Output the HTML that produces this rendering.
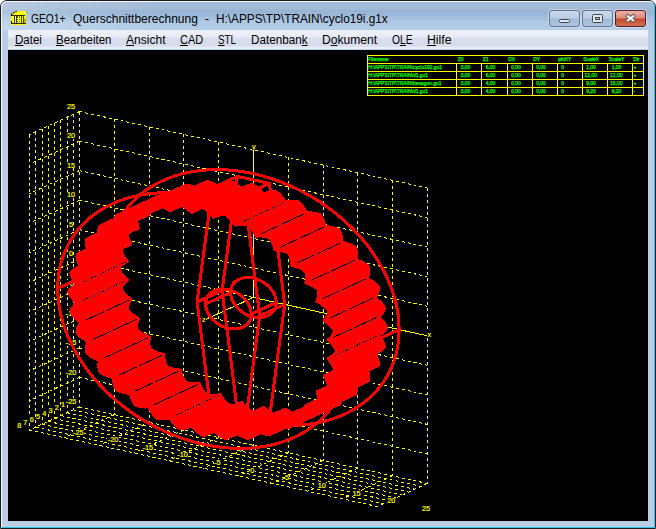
<!DOCTYPE html>
<html><head><meta charset="utf-8"><title>GEO1+ Querschnittberechnung</title>
<style>
html,body{margin:0;padding:0;background:#fff;}
body{width:656px;height:529px;position:relative;overflow:hidden;font-family:"Liberation Sans",sans-serif;}
#win{position:absolute;left:0;top:0;width:654px;height:527px;border:1px solid #1c1c1c;border-radius:7px 7px 0 0;
 background:#b9cde4;overflow:hidden;}
#win:before{content:"";position:absolute;left:0;top:0;right:0;bottom:0;border-radius:6px 6px 0 0;
 border-left:1px solid #f4f8fc;border-top:1px solid #f4f8fc;border-right:1px solid #2bc6e6;border-bottom:1px solid #2bc6e6;z-index:5;pointer-events:none}
#cap{position:absolute;left:0;top:0;width:654px;height:29px;
 background:linear-gradient(to bottom,#a4bcd8 0px,#a2bbd7 8px,#97b4d5 9px,#9ab7d7 14px,#a2bedc 15px,#a6c2df 19px,#afc9e5 20px,#b3cde8 28px);}
#cap2{position:absolute;left:0;top:0;width:160px;height:29px;background:linear-gradient(to right,rgba(255,255,255,.22),rgba(255,255,255,0));}
#ttl{position:absolute;left:0;top:9.6px;height:16px}
.tw{position:absolute;top:0;font-size:12px;line-height:16px;color:#000;white-space:pre;transform-origin:0 0}
#menu{position:absolute;left:7px;top:29px;width:640px;height:20px;
 background:linear-gradient(to bottom,#edf0f8 0px,#e9ecf6 7px,#d9deee 8px,#d6dcec 16px,#e6eaf5 17px,#eef1f8 19px,#b9cde4 19px);}
.mi{position:absolute;top:2px;font-size:12px;line-height:16px;color:#000;white-space:pre;transform-origin:0 0}
.mi u{text-decoration:underline;text-underline-offset:1px}
.btn{position:absolute;top:9px;width:29px;height:15px;border:1px solid #62748f;border-radius:3px;
 background:linear-gradient(to bottom,#cbd9ea 0,#bccde3 7px,#a3bad7 8px,#adc5e0 15px);box-shadow:0 0 0 1px rgba(255,255,255,.35)}
#bclose{border-color:#5b1a33;background:linear-gradient(to bottom,#e9b3a6 0,#dc8b79 7px,#c24a2b 8px,#d2704f 15px);}
</style></head><body>
<div id="win">
 <div id="cap"></div><div id="cap2"></div>
 <svg width="16" height="16" viewBox="0 0 16 16" style="position:absolute;left:10px;top:9px" shape-rendering="crispEdges">
  <path d="M0 4.5L6.5 0.5H15V15H0Z" fill="#ff0"/>
  <path d="M0 4.5L6.5 0.5" stroke="#111" stroke-width="1.2" stroke-dasharray="1.6 1" fill="none" shape-rendering="auto"/>
  <path d="M0.5 4V6M0.5 11V13.5" stroke="#111" stroke-width="1" fill="none"/>
  <path d="M1 5.5H14M0 13.5H15" stroke="#2a2a00" stroke-width="1" fill="none"/>
  <path d="M3 6V13M5 6V13M10 6V13M12 6V13" stroke="#3c3c00" stroke-width="1" fill="none"/>
  <path d="M6.5 7V13M8.5 7V13M6 6.5H9" stroke="#6a6a00" stroke-width="1" stroke-dasharray="1 1" fill="none"/>
  <path d="M13 9L15 7V12L13 13Z" fill="#b8b800"/>
 </svg>
 <div id="ttl"><span class="tw" style="left:29.5px;transform:scaleX(0.852)">GEO1+</span><span class="tw" style="left:72.3px;transform:scaleX(1.001)">Querschnittberechnung</span><span class="tw" style="left:204.1px;transform:scaleX(1.001)">-</span><span class="tw" style="left:214.8px;transform:scaleX(0.983)">H:\APPS\TP\TRAIN\cyclo19i.g1x</span></div>
 <div class="btn" style="left:548px"><svg width="29" height="15" style="position:absolute;left:0;top:0"><rect x="9.5" y="8.5" width="10" height="3" rx="1" fill="#e6e8ea" stroke="#3c4656"/></svg></div>
 <div class="btn" style="left:581px"><svg width="29" height="15" style="position:absolute;left:0;top:0"><rect x="9.5" y="3.5" width="10" height="8" rx="1" fill="#e6e8ea" stroke="#3c4656"/><rect x="12.5" y="6.5" width="4" height="2" fill="#a9bfdb" stroke="#3c4656"/></svg></div>
 <div class="btn" id="bclose" style="left:614px"><svg width="29" height="15" style="position:absolute;left:0;top:0"><path d="M10.3 4.1L18.7 10.5M18.7 4.1L10.3 10.5" stroke="#52525e" stroke-width="3.8" stroke-linecap="butt"/><path d="M11 4.6L18 10M18 4.6L11 10" stroke="#fff" stroke-width="2.1" stroke-linecap="butt"/></svg></div>
 <div id="menu"><span class="mi" style="left:6.6px;transform:scaleX(0.960)"><u>D</u>atei</span><span class="mi" style="left:47.5px;transform:scaleX(0.954)"><u>B</u>earbeiten</span><span class="mi" style="left:118.0px;transform:scaleX(1.004)"><u>A</u>nsicht</span><span class="mi" style="left:171.7px;transform:scaleX(0.916)"><u>C</u>AD</span><span class="mi" style="left:209.8px;transform:scaleX(0.818)"><u>S</u>TL</span><span class="mi" style="left:243.2px;transform:scaleX(0.975)">Datenban<u>k</u></span><span class="mi" style="left:314.2px;transform:scaleX(1.007)">D<u>o</u>kument</span><span class="mi" style="left:383.9px;transform:scaleX(0.858)">O<u>L</u>E</span><span class="mi" style="left:419.0px;transform:scaleX(1.021)"><u>H</u>ilfe</span></div>
</div>
<svg width="640" height="471" viewBox="8 50 640 471" style="position:absolute;left:8px;top:50px" shape-rendering="crispEdges">
<rect x="8" y="50" width="640" height="471" fill="#000"/>
<path d="M79.5 111.5L79.5 407M79.5 407L427.3 483.5M114.3 119.1L114.3 414.6M79.5 377.4L427.3 453.9M149.1 126.8L149.1 422.3M79.5 347.9L427.3 424.4M183.8 134.4L183.8 429.9M79.5 318.4L427.3 394.9M218.6 142.1L218.6 437.6M79.5 288.8L427.3 365.3M253.4 149.8L253.4 445.2M79.5 259.2L427.3 335.8M288.2 157.4L288.2 452.9M79.5 229.7L427.3 306.2M323 165.1L323 460.6M79.5 200.2L427.3 276.6M357.7 172.7L357.7 468.2M79.5 170.6L427.3 247.1M392.5 180.4L392.5 475.9M79.5 141.1L427.3 217.6M427.3 188L427.3 483.5M79.5 111.5L427.3 188M73.2 114.4L73.2 409.9M67 117.3L67 412.8M60.8 120.1L60.8 415.6M54.5 123L54.5 418.5M48.2 125.9L48.2 421.4M42 128.8L42 424.3M35.8 131.7L35.8 427.2M29.5 134.5L29.5 430M79.5 407L29.5 430M79.5 377.4L29.5 400.5M79.5 347.9L29.5 370.9M79.5 318.4L29.5 341.4M79.5 288.8L29.5 311.8M79.5 259.2L29.5 282.3M79.5 229.7L29.5 252.7M79.5 200.2L29.5 223.2M79.5 170.6L29.5 193.6M79.5 141.1L29.5 164.1M79.5 111.5L29.5 134.5M73.2 409.9L421.1 486.4M67 412.8L414.8 489.3M60.8 415.6L408.6 492.1M54.5 418.5L402.3 495M48.2 421.4L396.1 497.9M42 424.3L389.8 500.8M35.8 427.2L383.6 503.7M29.5 430L377.3 506.5M114.3 414.6L64.3 437.7M149.1 422.3L99.1 445.3M183.8 429.9L133.8 453M218.6 437.6L168.6 460.6M253.4 445.2L203.4 468.3M288.2 452.9L238.2 475.9M323 460.6L273 483.6M357.7 468.2L307.7 491.2M392.5 475.9L342.5 498.9M427.3 483.5L377.3 506.5" fill="none" stroke="#ff0" stroke-width="1" stroke-dasharray="3 3"/>
<path d="M253.4 297.5L427.3 335.8M253.4 297.5L253.4 149.8M253.4 297.5L203.4 320.5" fill="none" stroke="#ff0" stroke-width="1"/>
<path d="M65.4 398.4h11.3v6.4h-11.3zM72.7 428.7h11.3v6.4h-11.3zM65.4 368.8h11.3v6.4h-11.3zM107.4 436.3h11.3v6.4h-11.3zM65.4 339.3h11.3v6.4h-11.3zM142.2 444h11.3v6.4h-11.3zM65.4 309.8h11.3v6.4h-11.3zM177 451.6h11.3v6.4h-11.3zM67.4 280.2h7.2v6.4h-7.2zM213.8 459.3h7.2v6.4h-7.2zM68.7 250.6h4.7v6.4h-4.7zM249.8 466.9h4.7v6.4h-4.7zM68.7 221.1h4.7v6.4h-4.7zM284.6 474.6h4.7v6.4h-4.7zM66.6 191.5h8.8v6.4h-8.8zM317.4 482.2h8.8v6.4h-8.8zM66.6 162h8.8v6.4h-8.8zM352.1 489.9h8.8v6.4h-8.8zM66.6 132.4h8.8v6.4h-8.8zM386.9 497.6h8.8v6.4h-8.8zM66.6 102.9h8.8v6.4h-8.8zM421.7 505.2h8.8v6.4h-8.8zM60.6 401.6h4.7v6.4h-4.7zM54.4 404.5h4.7v6.4h-4.7zM48.1 407.3h4.7v6.4h-4.7zM41.9 410.2h4.7v6.4h-4.7zM35.6 413.1h4.7v6.4h-4.7zM29.3 416h4.7v6.4h-4.7zM23.1 418.9h4.7v6.4h-4.7zM16.8 421.7h4.7v6.4h-4.7zM426.9 330.9h4.7v6.4h-4.7zM251.5 142.9h4.7v6.4h-4.7zM201.5 315.7h4.7v6.4h-4.7z" fill="#000"/>
<g fill="#ff0" stroke="#ff0" stroke-width="0.2" font-family="'Liberation Sans',sans-serif" font-size="7.3px" shape-rendering="auto"><text x="71" y="404.2" text-anchor="middle">-25</text><text x="78.3" y="434.5" text-anchor="middle">-25</text><text x="71" y="374.6" text-anchor="middle">-20</text><text x="113.1" y="442.1" text-anchor="middle">-20</text><text x="71" y="345.1" text-anchor="middle">-15</text><text x="147.9" y="449.8" text-anchor="middle">-15</text><text x="71" y="315.6" text-anchor="middle">-10</text><text x="182.6" y="457.4" text-anchor="middle">-10</text><text x="71" y="286" text-anchor="middle">-5</text><text x="217.4" y="465.1" text-anchor="middle">-5</text><text x="71" y="256.4" text-anchor="middle">0</text><text x="252.2" y="472.8" text-anchor="middle">0</text><text x="71" y="226.9" text-anchor="middle">5</text><text x="287" y="480.4" text-anchor="middle">5</text><text x="71" y="197.3" text-anchor="middle">10</text><text x="321.8" y="488.1" text-anchor="middle">10</text><text x="71" y="167.8" text-anchor="middle">15</text><text x="356.5" y="495.7" text-anchor="middle">15</text><text x="71" y="138.2" text-anchor="middle">20</text><text x="391.3" y="503.4" text-anchor="middle">20</text><text x="71" y="108.7" text-anchor="middle">25</text><text x="426.1" y="511" text-anchor="middle">25</text><text x="63" y="407.4" text-anchor="middle">1</text><text x="56.7" y="410.3" text-anchor="middle">2</text><text x="50.5" y="413.1" text-anchor="middle">3</text><text x="44.2" y="416" text-anchor="middle">4</text><text x="38" y="418.9" text-anchor="middle">5</text><text x="31.7" y="421.8" text-anchor="middle">6</text><text x="25.4" y="424.7" text-anchor="middle">7</text><text x="19.2" y="427.5" text-anchor="middle">8</text><text x="429.3" y="336.8" text-anchor="middle">x</text><text x="253.9" y="148.8" text-anchor="middle">y</text><text x="203.9" y="321.5" text-anchor="middle">z</text></g>
<path d="M399.1 329.6L398.9 323L398.3 316.4L397.3 309.8L395.9 303.1L394.2 296.4L392 289.7L389.4 283.1L386.5 276.4L383.2 269.8L379.6 263.4L375.6 256.9L371.3 250.7L366.7 244.5L361.7 238.5L356.4 232.6L350.9 226.9L345.1 221.4L339.1 216.2L332.8 211.1L326.3 206.3L319.6 201.7L312.7 197.4L305.6 193.4L298.4 189.7L291.1 186.2L283.7 183.1L276.2 180.2L268.6 177.7L261 175.5L253.4 173.7L245.8 172.2L238.2 171L230.6 170.2L223.1 169.7L215.7 169.6L208.4 169.8L201.2 170.4L194.1 171.4L187.2 172.6L180.5 174.2L174 176.2L167.7 178.5L161.7 181.1L155.9 184L150.4 187.3L145.1 190.8L140.1 194.7L135.5 198.8L131.2 203.2L127.2 207.8L123.6 212.7L120.3 217.9L117.4 223.2L114.8 228.8L112.6 234.5L110.9 240.4L109.5 246.5L108.5 252.7L107.9 259L107.7 265.4L107.9 272L108.5 278.6L109.5 285.2L110.9 291.9L112.6 298.6L114.8 305.3L117.4 311.9L120.3 318.6L123.6 325.2L127.2 331.6L131.2 338.1L135.5 344.3L140.1 350.5L145.1 356.5L150.4 362.4L155.9 368.1L161.7 373.6L167.7 378.8L174 383.9L180.5 388.7L187.2 393.3L194.1 397.6L201.2 401.6L208.4 405.3L215.7 408.8L223.1 411.9L230.6 414.8L238.2 417.3L245.8 419.5L253.4 421.3L261 422.8L268.6 424L276.2 424.8L283.7 425.3L291.1 425.4L298.4 425.2L305.6 424.6L312.7 423.6L319.6 422.4L326.3 420.8L332.8 418.8L339.1 416.5L345.1 413.9L350.9 411L356.4 407.7L361.7 404.2L366.7 400.3L371.3 396.2L375.6 391.8L379.6 387.2L383.2 382.3L386.5 377.1L389.4 371.8L392 366.2L394.2 360.5L395.9 354.6L397.3 348.5L398.3 342.3L398.9 336ZM349.1 352.6L348.9 346.1L348.3 339.5L347.3 332.8L345.9 326.2L344.2 319.5L342 312.8L339.4 306.1L336.5 299.5L333.2 292.9L329.6 286.4L325.6 280L321.3 273.7L316.7 267.5L311.7 261.5L306.4 255.7L300.9 250L295.1 244.5L289.1 239.2L282.8 234.2L276.3 229.3L269.6 224.8L262.7 220.5L255.6 216.4L248.4 212.7L241.1 209.2L233.7 206.1L226.2 203.3L218.6 200.8L211 198.6L203.4 196.7L195.8 195.2L188.2 194.1L180.6 193.2L173.1 192.8L165.7 192.6L158.4 192.9L151.2 193.5L144.1 194.4L137.2 195.7L130.5 197.3L124 199.2L117.7 201.5L111.7 204.1L105.9 207.1L100.4 210.3L95.1 213.9L90.1 217.7L85.5 221.8L81.2 226.2L77.2 230.9L73.6 235.8L70.3 240.9L67.4 246.2L64.8 251.8L62.6 257.5L60.9 263.4L59.5 269.5L58.5 275.7L57.9 282.1L57.7 288.5L57.9 295L58.5 301.6L59.5 308.2L60.9 314.9L62.6 321.6L64.8 328.3L67.4 335L70.3 341.6L73.6 348.2L77.2 354.7L81.2 361.1L85.5 367.4L90.1 373.5L95.1 379.6L100.4 385.4L105.9 391.1L111.7 396.6L117.7 401.9L124 406.9L130.5 411.7L137.2 416.3L144.1 420.6L151.2 424.6L158.4 428.4L165.7 431.8L173.1 435L180.6 437.8L188.2 440.3L195.8 442.5L203.4 444.4L211 445.9L218.6 447L226.2 447.8L233.7 448.3L241.1 448.4L248.4 448.2L255.6 447.6L262.7 446.7L269.6 445.4L276.3 443.8L282.8 441.8L289.1 439.5L295.1 436.9L300.9 434L306.4 430.8L311.7 427.2L316.7 423.4L321.3 419.2L325.6 414.9L329.6 410.2L333.2 405.3L336.5 400.2L339.4 394.8L342 389.3L344.2 383.5L345.9 377.6L347.3 371.6L348.3 365.4L348.9 359ZM399.1 329.6L349.1 352.6M107.7 265.4L57.7 288.5M276.2 302.5L276 299.9L275.4 297.3L274.5 294.7L273.2 292.2L271.5 289.7L269.5 287.3L267.3 285.2L264.8 283.2L262.1 281.5L259.3 280.1L256.4 278.9L253.4 278.1L250.4 277.6L247.5 277.5L244.7 277.7L242 278.2L239.5 279.1L237.3 280.2L235.3 281.7L233.6 283.5L232.3 285.4L231.4 287.6L230.8 290L230.6 292.5L230.8 295.1L231.4 297.7L232.3 300.3L233.6 302.8L235.3 305.3L237.3 307.7L239.5 309.8L242 311.8L244.7 313.5L247.5 314.9L250.4 316.1L253.4 316.9L256.4 317.4L259.3 317.5L262.1 317.3L264.8 316.8L267.3 315.9L269.5 314.8L271.5 313.3L273.2 311.5L274.5 309.6L275.4 307.4L276 305ZM251.2 314L251 311.5L250.4 308.9L249.5 306.2L248.2 303.7L246.5 301.2L244.5 298.9L242.3 296.7L239.8 294.7L237.1 293L234.3 291.6L231.4 290.5L228.4 289.6L225.4 289.1L222.5 289L219.7 289.2L217 289.7L214.5 290.6L212.3 291.8L210.3 293.2L208.6 295L207.3 297L206.4 299.2L205.8 301.5L205.6 304L205.8 306.6L206.4 309.2L207.3 311.8L208.6 314.4L210.3 316.8L212.3 319.2L214.5 321.3L217 323.3L219.7 325L222.5 326.4L225.4 327.6L228.4 328.4L231.4 328.9L234.3 329L237.1 328.8L239.8 328.3L242.3 327.5L244.5 326.3L246.5 324.8L248.2 323.1L249.5 321.1L250.4 318.9L251 316.5ZM276.2 302.5L251.2 314M230.6 292.5L205.6 304M284.7 304.4L269.4 183.4L237.4 176.4L222.1 290.6L237.4 411.6L269.4 418.6ZM259.7 315.9L244.4 194.9L212.4 187.9L197.1 302.1L212.4 423.1L244.4 430.1ZM284.7 304.4L259.7 315.9M269.4 183.4L244.4 194.9M237.4 176.4L212.4 187.9M222.1 290.6L197.1 302.1M237.4 411.6L212.4 423.1M269.4 418.6L244.4 430.1" fill="none" stroke="#f00" stroke-width="3" stroke-linejoin="round" stroke-linecap="round"/>
<path d="M386.5 327.8L336.5 350.9M385.9 326.3L335.9 349.3M385.1 324.7L335.1 347.8M384.1 323.1L334.1 346.2M382.8 321.5L332.8 344.6M381.4 319.9L331.4 342.9M379.9 318.3L329.9 341.3M378.3 316.7L328.3 339.7M379.6 315.5L329.6 338.6M380.9 314.3L330.9 337.4M382 313.1L332 336.1M382.9 311.8L332.9 334.8M383.7 310.4L333.7 333.5M384.2 309.1L334.2 332.1M384.4 307.7L334.4 330.7M383.6 306.2L333.6 329.2M382.5 304.7L332.5 327.7M381.2 303.2L331.2 326.2M379.7 301.7L329.7 324.8M378.1 300.3L328.1 323.3M376.3 298.9L326.3 321.9M374.5 297.5L324.5 320.5M375.5 296.1L325.5 319.1M376.4 294.6L326.4 317.7M377.2 293.2L327.2 316.2M377.8 291.7L327.8 314.7M378.2 290.2L328.2 313.2M378.4 288.7L328.4 311.7M378.4 287.2L328.4 310.2M377.3 285.8L327.3 308.8M376 284.4L326 307.5M374.5 283.1L324.5 306.1M372.8 281.8L322.8 304.9M370.9 280.6L320.9 303.6M369 279.4L319 302.4M367 278.3L317 301.3M367.6 276.7L317.6 299.7M368.2 275L318.2 298.1M368.6 273.4L318.6 296.5M368.9 271.8L318.9 294.8M369 270.2L319 293.2M368.9 268.6L318.9 291.6M368.5 267.1L318.5 290.1M367.2 265.8L317.2 288.8M365.7 264.6L315.7 287.6M364 263.5L314 286.5M362.1 262.4L312.1 285.5M360.2 261.5L310.2 284.5M358.1 260.5L308.1 283.6M356 259.7L306 282.7M356.3 257.9L306.3 281M356.5 256.2L306.5 279.2M356.6 254.4L306.6 277.5M356.5 252.7L306.5 275.7M356.2 251L306.2 274.1M355.8 249.4L305.8 272.5M355.2 247.9L305.2 270.9M353.7 246.8L303.7 269.8M352 245.8L302 268.8M350.2 244.9L300.2 268M348.2 244.1L298.2 267.2M346.2 243.4L296.2 266.5M344 242.8L294 265.9M341.9 242.3L291.9 265.3M341.8 240.4L291.8 263.5M341.6 238.6L291.6 261.6M341.3 236.8L291.3 259.8M340.9 235L290.9 258M340.3 233.3L290.3 256.4M339.6 231.7L289.6 254.8M338.7 230.3L288.7 253.3M337.1 229.4L287.1 252.4M335.3 228.6L285.3 251.6M333.4 228L283.4 251M331.4 227.5L281.4 250.5M329.3 227.1L279.3 250.1M327.2 226.8L277.2 249.8M325 226.6L275 249.6M324.6 224.7L274.6 247.7M324 222.8L274 245.8M323.4 221L273.4 244M322.6 219.2L272.6 242.3M321.8 217.6L271.8 240.6M320.7 216.1L270.7 239.1M319.6 214.7L269.6 237.7M317.9 214L267.9 237.1M316 213.5L266 236.6M314.1 213.2L264.1 236.2M312.1 213L262.1 236M310.1 212.9L260.1 235.9M308.1 212.9L258.1 236M306 213L256 236.1M305.2 211.2L255.2 234.2M304.3 209.3L254.3 232.4M303.3 207.5L253.3 230.6M302.3 205.9L252.3 228.9M301.1 204.3L251.1 227.4M299.8 202.9L249.8 226M298.5 201.7L248.5 224.7M296.7 201.3L246.7 224.3M294.9 201L244.9 224.1M293 201L243 224M291.1 201.1L241.1 224.1M289.2 201.3L239.2 224.4M287.3 201.7L237.3 224.7M285.3 202.1L235.3 225.1M284.2 200.3L234.2 223.3M283 198.5L233 221.6M281.7 196.9L231.7 219.9M280.4 195.3L230.4 218.3M278.9 193.9L228.9 216.9M277.5 192.7L227.5 215.7M275.9 191.6L225.9 214.6M274.2 191.4L224.2 214.5M272.4 191.5L222.4 214.5M270.7 191.7L220.7 214.8M268.9 192.1L218.9 215.2M267.1 192.7L217.1 215.7M265.4 193.4L215.4 216.4M263.7 194.1L213.7 217.1M262.2 192.4L212.2 215.5M260.7 190.8L210.7 213.8M259.2 189.3L209.2 212.3M257.6 187.9L207.6 210.9M256 186.7L206 209.7M254.4 185.6L204.4 208.6M252.7 184.8L202.7 207.8M251 184.9L201 207.9M249.4 185.2L199.4 208.2M247.8 185.7L197.8 208.8M246.2 186.4L196.2 209.5M244.7 187.3L194.7 210.3M243.2 188.2L193.2 211.3M241.7 189.3L191.7 212.3M240 187.8L190 210.8M238.3 186.3L188.3 209.4M236.5 185L186.5 208.1M234.7 183.8L184.7 206.9M233 182.8L183 205.8M231.2 182L181.2 205M229.5 181.4L179.5 204.4M227.9 181.8L177.9 204.8M226.5 182.3L176.5 205.4M225.1 183.1L175.1 206.2M223.7 184.1L173.7 207.2M222.4 185.2L172.4 208.3M221.2 186.5L171.2 209.5M220.1 187.7L170.1 210.8M218.2 186.5L168.2 209.5M216.2 185.3L166.2 208.3M214.3 184.2L164.3 207.2M212.4 183.2L162.4 206.3M210.5 182.5L160.5 205.5M208.7 181.9L158.7 204.9M207 181.6L157 204.6M205.6 182.2L155.6 205.2M204.3 183L154.3 206.1M203.2 184.1L153.2 207.1M202.1 185.3L152.1 208.3M201.1 186.6L151.1 209.7M200.2 188.1L150.2 211.1M199.4 189.6L149.4 212.6M197.4 188.6L147.4 211.6M195.3 187.7L145.3 210.7M193.3 186.8L143.3 209.9M191.3 186.2L141.3 209.2M189.4 185.7L139.4 208.7M187.5 185.4L137.5 208.4M185.8 185.3L135.8 208.3M184.7 186.1L134.7 209.2M183.6 187.2L133.6 210.2M182.8 188.5L132.8 211.5M182 189.9L132 212.9M181.4 191.4L131.4 214.5M180.8 193.1L130.8 216.1M180.4 194.7L130.4 217.8M178.2 194L128.2 217.1M176.1 193.4L126.1 216.4M174 192.9L124 215.9M172 192.5L122 215.5M170.1 192.3L120.1 215.3M168.4 192.3L118.4 215.3M166.7 192.4L116.7 215.5M165.8 193.5L115.8 216.6M165.1 194.8L115.1 217.8M164.5 196.2L114.5 219.2M164.1 197.8L114.1 220.8M163.8 199.5L113.8 222.5M163.6 201.2L113.6 224.3M163.5 203L113.5 226.1M161.4 202.6L111.4 225.7M159.3 202.3L109.3 225.4M157.2 202.1L107.2 225.2M155.2 202L105.2 225.1M153.4 202.1L103.4 225.2M151.7 202.4L101.7 225.4M150.2 202.8L100.2 225.9M149.6 204.1L99.6 227.1M149.2 205.5L99.2 228.5M148.9 207L98.9 230.1M148.8 208.7L98.8 231.8M148.9 210.5L98.9 233.6M149.1 212.4L99.1 235.4M149.4 214.2L99.4 237.3M147.3 214.2L97.3 237.2M145.2 214.2L95.2 237.2M143.3 214.3L93.3 237.3M141.4 214.5L91.4 237.6M139.7 214.9L89.7 237.9M138.2 215.4L88.2 238.5M136.9 216.1L86.9 239.1M136.5 217.5L86.5 240.5M136.4 219L86.4 242.1M136.5 220.7L86.5 243.7M136.8 222.4L86.8 245.4M137.2 224.2L87.2 247.3M137.8 226.1L87.8 249.1M138.4 228L88.4 251M136.4 228.3L86.4 251.3M134.5 228.6L84.5 251.6M132.6 229L82.6 252M130.9 229.5L80.9 252.6M129.4 230.2L79.4 253.2M128.1 231L78.1 254M127 231.9L77 254.9M127 233.4L77 256.4M127.2 235L77.2 258M127.6 236.6L77.6 259.7M128.2 238.4L78.2 261.4M129 240.2L79 263.2M129.9 242L79.9 265.1M130.9 243.9L80.9 266.9M129.1 244.5L79.1 267.5M127.3 245.1L77.3 268.2M125.7 245.8L75.7 268.9M124.2 246.7L74.2 269.7M122.9 247.6L72.9 270.6M121.8 248.6L71.8 271.6M121 249.7L71 272.7M121.2 251.2L71.2 274.3M121.7 252.8L71.7 275.9M122.5 254.5L72.5 277.5M123.4 256.2L73.4 279.3M124.5 258L74.5 281M125.8 259.7L75.8 282.7M127.1 261.4L77.1 284.5M125.5 262.3L75.5 285.4M124 263.3L74 286.3M122.6 264.3L72.6 287.3M121.3 265.3L71.3 288.4M120.3 266.5L70.3 289.5M119.5 267.7L69.5 290.7M118.9 269L68.9 292M119.5 270.5L69.5 293.6M120.3 272.1L70.3 295.1M121.3 273.7L71.3 296.7M122.6 275.3L72.6 298.3M124 276.9L74 300M125.5 278.5L75.5 301.6M127.1 280.1L77.1 303.2M125.8 281.3L75.8 304.3M124.5 282.5L74.5 305.5M123.4 283.7L73.4 306.8M122.5 285L72.5 308.1M121.7 286.4L71.7 309.4M121.2 287.8L71.2 310.8M121 289.2L71 312.2M121.8 290.7L71.8 313.7M122.9 292.2L72.9 315.2M124.2 293.6L74.2 316.7M125.7 295.1L75.7 318.1M127.3 296.5L77.3 319.6M129.1 298L79.1 321M130.9 299.3L80.9 322.4M129.9 300.8L79.9 323.8M129 302.2L79 325.2M128.2 303.7L78.2 326.7M127.6 305.1L77.6 328.2M127.2 306.6L77.2 329.7M127 308.1L77 331.2M127 309.6L77 332.7M128.1 311L78.1 334.1M129.4 312.4L79.4 335.4M130.9 313.7L80.9 336.8M132.6 315L82.6 338M134.5 316.2L84.5 339.3M136.4 317.4L86.4 340.5M138.4 318.6L88.4 341.6M137.8 320.2L87.8 343.2M137.2 321.8L87.2 344.8M136.8 323.4L86.8 346.4M136.5 325L86.5 348.1M136.4 326.6L86.4 349.7M136.5 328.2L86.5 351.3M136.9 329.8L86.9 352.8M138.2 331L88.2 354.1M139.7 332.2L89.7 355.3M141.4 333.3L91.4 356.4M143.3 334.4L93.3 357.4M145.2 335.4L95.2 358.4M147.3 336.3L97.3 359.3M149.4 337.1L99.4 360.2M149.1 338.9L99.1 361.9M148.9 340.7L98.9 363.7M148.8 342.4L98.8 365.4M148.9 344.1L98.9 367.2M149.2 345.8L99.2 368.8M149.6 347.4L99.6 370.4M150.2 348.9L100.2 372M151.7 350L101.7 373.1M153.4 351L103.4 374.1M155.2 351.9L105.2 375M157.2 352.7L107.2 375.7M159.3 353.4L109.3 376.4M161.4 354L111.4 377M163.5 354.6L113.5 377.6M163.6 356.4L113.6 379.4M163.8 358.3L113.8 381.3M164.1 360.1L114.1 383.1M164.5 361.8L114.5 384.9M165.1 363.5L115.1 386.5M165.8 365.1L115.8 388.1M166.7 366.6L116.7 389.6M168.4 367.5L118.4 390.5M170.1 368.2L120.1 391.3M172 368.8L122 391.9M174 369.3L124 392.4M176.1 369.7L126.1 392.8M178.2 370L128.2 393.1M180.4 370.3L130.4 393.3M180.8 372.2L130.8 395.2M181.4 374L131.4 397.1M182 375.8L132 398.9M182.8 377.6L132.8 400.6M183.6 379.2L133.6 402.3M184.7 380.7L134.7 403.8M185.8 382.1L135.8 405.2M187.5 382.8L137.5 405.8M189.4 383.3L139.4 406.3M191.3 383.6L141.3 406.7M193.3 383.8L143.3 406.9M195.3 383.9L145.3 407M197.4 383.9L147.4 406.9M199.4 383.8L149.4 406.8M200.2 385.7L150.2 408.7M201.1 387.5L151.1 410.5M202.1 389.3L152.1 412.3M203.2 391L153.2 414M204.3 392.5L154.3 415.6M205.6 393.9L155.6 417M207 395.1L157 418.2M208.7 395.6L158.7 418.6M210.5 395.8L160.5 418.8M212.4 395.8L162.4 418.9M214.3 395.7L164.3 418.8M216.2 395.5L166.2 418.5M218.2 395.1L168.2 418.2M220.1 394.7L170.1 417.8M221.2 396.5L171.2 419.6M222.4 398.3L172.4 421.3M223.7 400L173.7 423M225.1 401.5L175.1 424.6M226.5 402.9L176.5 426M227.9 404.2L177.9 427.2M229.5 405.2L179.5 428.3M231.2 405.4L181.2 428.4M233 405.3L183 428.4M234.7 405.1L184.7 428.1M236.5 404.7L186.5 427.7M238.3 404.1L188.3 427.2M240 403.5L190 426.5M241.7 402.7L191.7 425.8M243.2 404.4L193.2 427.4M244.7 406L194.7 429.1M246.2 407.5L196.2 430.6M247.8 408.9L197.8 432M249.4 410.2L199.4 433.2M251 411.2L201 434.3M252.7 412.1L202.7 435.1M254.4 411.9L204.4 435M256 411.6L206 434.7M257.6 411.1L207.6 434.1M259.2 410.4L209.2 433.4M260.7 409.5L210.7 432.6M262.2 408.6L212.2 431.6M263.7 407.6L213.7 430.6M265.4 409.1L215.4 432.1M267.1 410.5L217.1 433.5M268.9 411.8L218.9 434.8M270.7 413L220.7 436M272.4 414L222.4 437.1M274.2 414.8L224.2 437.9M275.9 415.4L225.9 438.5M277.5 415.1L227.5 438.1M278.9 414.5L228.9 437.5M280.4 413.7L230.4 436.7M281.7 412.7L231.7 435.7M283 411.6L233 434.6M284.2 410.4L234.2 433.4M285.3 409.1L235.3 432.1M287.3 410.3L237.3 433.4M289.2 411.5L239.2 434.6M291.1 412.6L241.1 435.7M293 413.6L243 436.6M294.9 414.3L244.9 437.4M296.7 414.9L246.7 438M298.5 415.3L248.5 438.3M299.8 414.6L249.8 437.7M301.1 413.8L251.1 436.8M302.3 412.8L252.3 435.8M303.3 411.5L253.3 434.6M304.3 410.2L254.3 433.2M305.2 408.7L255.2 431.8M306 407.2L256 430.3M308.1 408.2L258.1 431.3M310.1 409.2L260.1 432.2M312.1 410L262.1 433M314.1 410.7L264.1 433.7M316 411.2L266 434.2M317.9 411.5L267.9 434.5M319.6 411.5L269.6 434.6M320.7 410.7L270.7 433.7M321.8 409.6L271.8 432.7M322.6 408.4L272.6 431.4M323.4 406.9L273.4 430M324 405.4L274 428.4M324.6 403.8L274.6 426.8M325 402.1L275 425.1M327.2 402.8L277.2 425.8M329.3 403.4L279.3 426.5M331.4 404L281.4 427M333.4 404.3L283.4 427.4M335.3 404.5L285.3 427.6M337.1 404.6L287.1 427.6M338.7 404.4L288.7 427.4M339.6 403.3L289.6 426.4M340.3 402.1L290.3 425.1M340.9 400.6L290.9 423.7M341.3 399L291.3 422.1M341.6 397.4L291.6 420.4M341.8 395.6L291.8 418.6M341.9 393.8L291.9 416.8M344 394.2L294 417.2M346.2 394.5L296.2 417.5M348.2 394.7L298.2 417.7M350.2 394.8L300.2 417.8M352 394.7L302 417.7M353.7 394.4L303.7 417.5M355.2 394L305.2 417M355.8 392.8L305.8 415.8M356.2 391.3L306.2 414.4M356.5 389.8L306.5 412.8M356.6 388.1L306.6 411.1M356.5 386.3L306.5 409.3M356.3 384.5L306.3 407.5M356 382.6L306 405.6M358.1 382.7L308.1 405.7M360.2 382.6L310.2 405.7M362.1 382.5L312.1 405.6M364 382.3L314 405.4M365.7 381.9L315.7 405M367.2 381.4L317.2 404.4M368.5 380.7L318.5 403.8M368.9 379.3L318.9 402.4M369 377.8L319 400.8M368.9 376.2L318.9 399.2M368.6 374.4L318.6 397.5M368.2 372.6L318.2 395.6M367.6 370.7L317.6 393.8M367 368.8L317 391.9M369 368.6L319 391.6M370.9 368.2L320.9 391.3M372.8 367.8L322.8 390.9M374.5 367.3L324.5 390.3M376 366.6L326 389.7M377.3 365.8L327.3 388.9M378.4 364.9L328.4 388M378.4 363.4L328.4 386.5M378.2 361.9L328.2 384.9M377.8 360.2L327.8 383.2M377.2 358.4L327.2 381.5M376.4 356.6L326.4 379.7M375.5 354.8L325.5 377.8M374.5 352.9L324.5 376M376.3 352.3L326.3 375.4M378.1 351.7L328.1 374.7M379.7 351L329.7 374M381.2 350.2L331.2 373.2M382.5 349.3L332.5 372.3M383.6 348.2L333.6 371.3M384.4 347.1L334.4 370.2M384.2 345.6L334.2 368.6M383.7 344L333.7 367M382.9 342.3L332.9 365.4M382 340.6L332 363.6M380.9 338.9L330.9 361.9M379.6 337.1L329.6 360.2M378.3 335.4L328.3 358.4M379.9 334.5L329.9 357.5M381.4 333.6L331.4 356.6M382.8 332.5L332.8 355.6M384.1 331.5L334.1 354.5M385.1 330.3L335.1 353.4M385.9 329.1L335.9 352.2M386.5 327.8L385.9 326.3L385.1 324.7L384.1 323.1L382.8 321.5L381.4 319.9L379.9 318.3L378.3 316.7L379.6 315.5L380.9 314.3L382 313.1L382.9 311.8L383.7 310.4L384.2 309.1L384.4 307.7L383.6 306.2L382.5 304.7L381.2 303.2L379.7 301.7L378.1 300.3L376.3 298.9L374.5 297.5L375.5 296.1L376.4 294.6L377.2 293.2L377.8 291.7L378.2 290.2L378.4 288.7L378.4 287.2L377.3 285.8L376 284.4L374.5 283.1L372.8 281.8L370.9 280.6L369 279.4L367 278.3L367.6 276.7L368.2 275L368.6 273.4L368.9 271.8L369 270.2L368.9 268.6L368.5 267.1L367.2 265.8L365.7 264.6L364 263.5L362.1 262.4L360.2 261.5L358.1 260.5L356 259.7L356.3 257.9L356.5 256.2L356.6 254.4L356.5 252.7L356.2 251L355.8 249.4L355.2 247.9L353.7 246.8L352 245.8L350.2 244.9L348.2 244.1L346.2 243.4L344 242.8L341.9 242.3L341.8 240.4L341.6 238.6L341.3 236.8L340.9 235L340.3 233.3L339.6 231.7L338.7 230.3L337.1 229.4L335.3 228.6L333.4 228L331.4 227.5L329.3 227.1L327.2 226.8L325 226.6L324.6 224.7L324 222.8L323.4 221L322.6 219.2L321.8 217.6L320.7 216.1L319.6 214.7L317.9 214L316 213.5L314.1 213.2L312.1 213L310.1 212.9L308.1 212.9L306 213L305.2 211.2L304.3 209.3L303.3 207.5L302.3 205.9L301.1 204.3L299.8 202.9L298.5 201.7L296.7 201.3L294.9 201L293 201L291.1 201.1L289.2 201.3L287.3 201.7L285.3 202.1L284.2 200.3L283 198.5L281.7 196.9L280.4 195.3L278.9 193.9L277.5 192.7L275.9 191.6L274.2 191.4L272.4 191.5L270.7 191.7L268.9 192.1L267.1 192.7L265.4 193.4L263.7 194.1L262.2 192.4L260.7 190.8L259.2 189.3L257.6 187.9L256 186.7L254.4 185.6L252.7 184.8L251 184.9L249.4 185.2L247.8 185.7L246.2 186.4L244.7 187.3L243.2 188.2L241.7 189.3L240 187.8L238.3 186.3L236.5 185L234.7 183.8L233 182.8L231.2 182L229.5 181.4L227.9 181.8L226.5 182.3L225.1 183.1L223.7 184.1L222.4 185.2L221.2 186.5L220.1 187.7L218.2 186.5L216.2 185.3L214.3 184.2L212.4 183.2L210.5 182.5L208.7 181.9L207 181.6L205.6 182.2L204.3 183L203.2 184.1L202.1 185.3L201.1 186.6L200.2 188.1L199.4 189.6L197.4 188.6L195.3 187.7L193.3 186.8L191.3 186.2L189.4 185.7L187.5 185.4L185.8 185.3L184.7 186.1L183.6 187.2L182.8 188.5L182 189.9L181.4 191.4L180.8 193.1L180.4 194.7L178.2 194L176.1 193.4L174 192.9L172 192.5L170.1 192.3L168.4 192.3L166.7 192.4L165.8 193.5L165.1 194.8L164.5 196.2L164.1 197.8L163.8 199.5L163.6 201.2L163.5 203L161.4 202.6L159.3 202.3L157.2 202.1L155.2 202L153.4 202.1L151.7 202.4L150.2 202.8L149.6 204.1L149.2 205.5L148.9 207L148.8 208.7L148.9 210.5L149.1 212.4L149.4 214.2L147.3 214.2L145.2 214.2L143.3 214.3L141.4 214.5L139.7 214.9L138.2 215.4L136.9 216.1L136.5 217.5L136.4 219L136.5 220.7L136.8 222.4L137.2 224.2L137.8 226.1L138.4 228L136.4 228.3L134.5 228.6L132.6 229L130.9 229.5L129.4 230.2L128.1 231L127 231.9L127 233.4L127.2 235L127.6 236.6L128.2 238.4L129 240.2L129.9 242L130.9 243.9L129.1 244.5L127.3 245.1L125.7 245.8L124.2 246.7L122.9 247.6L121.8 248.6L121 249.7L121.2 251.2L121.7 252.8L122.5 254.5L123.4 256.2L124.5 258L125.8 259.7L127.1 261.4L125.5 262.3L124 263.3L122.6 264.3L121.3 265.3L120.3 266.5L119.5 267.7L118.9 269L119.5 270.5L120.3 272.1L121.3 273.7L122.6 275.3L124 276.9L125.5 278.5L127.1 280.1L125.8 281.3L124.5 282.5L123.4 283.7L122.5 285L121.7 286.4L121.2 287.8L121 289.2L121.8 290.7L122.9 292.2L124.2 293.6L125.7 295.1L127.3 296.5L129.1 298L130.9 299.3L129.9 300.8L129 302.2L128.2 303.7L127.6 305.1L127.2 306.6L127 308.1L127 309.6L128.1 311L129.4 312.4L130.9 313.7L132.6 315L134.5 316.2L136.4 317.4L138.4 318.6L137.8 320.2L137.2 321.8L136.8 323.4L136.5 325L136.4 326.6L136.5 328.2L136.9 329.8L138.2 331L139.7 332.2L141.4 333.3L143.3 334.4L145.2 335.4L147.3 336.3L149.4 337.1L149.1 338.9L148.9 340.7L148.8 342.4L148.9 344.1L149.2 345.8L149.6 347.4L150.2 348.9L151.7 350L153.4 351L155.2 351.9L157.2 352.7L159.3 353.4L161.4 354L163.5 354.6L163.6 356.4L163.8 358.3L164.1 360.1L164.5 361.8L165.1 363.5L165.8 365.1L166.7 366.6L168.4 367.5L170.1 368.2L172 368.8L174 369.3L176.1 369.7L178.2 370L180.4 370.3L180.8 372.2L181.4 374L182 375.8L182.8 377.6L183.6 379.2L184.7 380.7L185.8 382.1L187.5 382.8L189.4 383.3L191.3 383.6L193.3 383.8L195.3 383.9L197.4 383.9L199.4 383.8L200.2 385.7L201.1 387.5L202.1 389.3L203.2 391L204.3 392.5L205.6 393.9L207 395.1L208.7 395.6L210.5 395.8L212.4 395.8L214.3 395.7L216.2 395.5L218.2 395.1L220.1 394.7L221.2 396.5L222.4 398.3L223.7 400L225.1 401.5L226.5 402.9L227.9 404.2L229.5 405.2L231.2 405.4L233 405.3L234.7 405.1L236.5 404.7L238.3 404.1L240 403.5L241.7 402.7L243.2 404.4L244.7 406L246.2 407.5L247.8 408.9L249.4 410.2L251 411.2L252.7 412.1L254.4 411.9L256 411.6L257.6 411.1L259.2 410.4L260.7 409.5L262.2 408.6L263.7 407.6L265.4 409.1L267.1 410.5L268.9 411.8L270.7 413L272.4 414L274.2 414.8L275.9 415.4L277.5 415.1L278.9 414.5L280.4 413.7L281.7 412.7L283 411.6L284.2 410.4L285.3 409.1L287.3 410.3L289.2 411.5L291.1 412.6L293 413.6L294.9 414.3L296.7 414.9L298.5 415.3L299.8 414.6L301.1 413.8L302.3 412.8L303.3 411.5L304.3 410.2L305.2 408.7L306 407.2L308.1 408.2L310.1 409.2L312.1 410L314.1 410.7L316 411.2L317.9 411.5L319.6 411.5L320.7 410.7L321.8 409.6L322.6 408.4L323.4 406.9L324 405.4L324.6 403.8L325 402.1L327.2 402.8L329.3 403.4L331.4 404L333.4 404.3L335.3 404.5L337.1 404.6L338.7 404.4L339.6 403.3L340.3 402.1L340.9 400.6L341.3 399L341.6 397.4L341.8 395.6L341.9 393.8L344 394.2L346.2 394.5L348.2 394.7L350.2 394.8L352 394.7L353.7 394.4L355.2 394L355.8 392.8L356.2 391.3L356.5 389.8L356.6 388.1L356.5 386.3L356.3 384.5L356 382.6L358.1 382.7L360.2 382.6L362.1 382.5L364 382.3L365.7 381.9L367.2 381.4L368.5 380.7L368.9 379.3L369 377.8L368.9 376.2L368.6 374.4L368.2 372.6L367.6 370.7L367 368.8L369 368.6L370.9 368.2L372.8 367.8L374.5 367.3L376 366.6L377.3 365.8L378.4 364.9L378.4 363.4L378.2 361.9L377.8 360.2L377.2 358.4L376.4 356.6L375.5 354.8L374.5 352.9L376.3 352.3L378.1 351.7L379.7 351L381.2 350.2L382.5 349.3L383.6 348.2L384.4 347.1L384.2 345.6L383.7 344L382.9 342.3L382 340.6L380.9 338.9L379.6 337.1L378.3 335.4L379.9 334.5L381.4 333.6L382.8 332.5L384.1 331.5L385.1 330.3L385.9 329.1ZM336.5 350.9L335.9 349.3L335.1 347.8L334.1 346.2L332.8 344.6L331.4 342.9L329.9 341.3L328.3 339.7L329.6 338.6L330.9 337.4L332 336.1L332.9 334.8L333.7 333.5L334.2 332.1L334.4 330.7L333.6 329.2L332.5 327.7L331.2 326.2L329.7 324.8L328.1 323.3L326.3 321.9L324.5 320.5L325.5 319.1L326.4 317.7L327.2 316.2L327.8 314.7L328.2 313.2L328.4 311.7L328.4 310.2L327.3 308.8L326 307.5L324.5 306.1L322.8 304.9L320.9 303.6L319 302.4L317 301.3L317.6 299.7L318.2 298.1L318.6 296.5L318.9 294.8L319 293.2L318.9 291.6L318.5 290.1L317.2 288.8L315.7 287.6L314 286.5L312.1 285.5L310.2 284.5L308.1 283.6L306 282.7L306.3 281L306.5 279.2L306.6 277.5L306.5 275.7L306.2 274.1L305.8 272.5L305.2 270.9L303.7 269.8L302 268.8L300.2 268L298.2 267.2L296.2 266.5L294 265.9L291.9 265.3L291.8 263.5L291.6 261.6L291.3 259.8L290.9 258L290.3 256.4L289.6 254.8L288.7 253.3L287.1 252.4L285.3 251.6L283.4 251L281.4 250.5L279.3 250.1L277.2 249.8L275 249.6L274.6 247.7L274 245.8L273.4 244L272.6 242.3L271.8 240.6L270.7 239.1L269.6 237.7L267.9 237.1L266 236.6L264.1 236.2L262.1 236L260.1 235.9L258.1 236L256 236.1L255.2 234.2L254.3 232.4L253.3 230.6L252.3 228.9L251.1 227.4L249.8 226L248.5 224.7L246.7 224.3L244.9 224.1L243 224L241.1 224.1L239.2 224.4L237.3 224.7L235.3 225.1L234.2 223.3L233 221.6L231.7 219.9L230.4 218.3L228.9 216.9L227.5 215.7L225.9 214.6L224.2 214.5L222.4 214.5L220.7 214.8L218.9 215.2L217.1 215.7L215.4 216.4L213.7 217.1L212.2 215.5L210.7 213.8L209.2 212.3L207.6 210.9L206 209.7L204.4 208.6L202.7 207.8L201 207.9L199.4 208.2L197.8 208.8L196.2 209.5L194.7 210.3L193.2 211.3L191.7 212.3L190 210.8L188.3 209.4L186.5 208.1L184.7 206.9L183 205.8L181.2 205L179.5 204.4L177.9 204.8L176.5 205.4L175.1 206.2L173.7 207.2L172.4 208.3L171.2 209.5L170.1 210.8L168.2 209.5L166.2 208.3L164.3 207.2L162.4 206.3L160.5 205.5L158.7 204.9L157 204.6L155.6 205.2L154.3 206.1L153.2 207.1L152.1 208.3L151.1 209.7L150.2 211.1L149.4 212.6L147.4 211.6L145.3 210.7L143.3 209.9L141.3 209.2L139.4 208.7L137.5 208.4L135.8 208.3L134.7 209.2L133.6 210.2L132.8 211.5L132 212.9L131.4 214.5L130.8 216.1L130.4 217.8L128.2 217.1L126.1 216.4L124 215.9L122 215.5L120.1 215.3L118.4 215.3L116.7 215.5L115.8 216.6L115.1 217.8L114.5 219.2L114.1 220.8L113.8 222.5L113.6 224.3L113.5 226.1L111.4 225.7L109.3 225.4L107.2 225.2L105.2 225.1L103.4 225.2L101.7 225.4L100.2 225.9L99.6 227.1L99.2 228.5L98.9 230.1L98.8 231.8L98.9 233.6L99.1 235.4L99.4 237.3L97.3 237.2L95.2 237.2L93.3 237.3L91.4 237.6L89.7 237.9L88.2 238.5L86.9 239.1L86.5 240.5L86.4 242.1L86.5 243.7L86.8 245.4L87.2 247.3L87.8 249.1L88.4 251L86.4 251.3L84.5 251.6L82.6 252L80.9 252.6L79.4 253.2L78.1 254L77 254.9L77 256.4L77.2 258L77.6 259.7L78.2 261.4L79 263.2L79.9 265.1L80.9 266.9L79.1 267.5L77.3 268.2L75.7 268.9L74.2 269.7L72.9 270.6L71.8 271.6L71 272.7L71.2 274.3L71.7 275.9L72.5 277.5L73.4 279.3L74.5 281L75.8 282.7L77.1 284.5L75.5 285.4L74 286.3L72.6 287.3L71.3 288.4L70.3 289.5L69.5 290.7L68.9 292L69.5 293.6L70.3 295.1L71.3 296.7L72.6 298.3L74 300L75.5 301.6L77.1 303.2L75.8 304.3L74.5 305.5L73.4 306.8L72.5 308.1L71.7 309.4L71.2 310.8L71 312.2L71.8 313.7L72.9 315.2L74.2 316.7L75.7 318.1L77.3 319.6L79.1 321L80.9 322.4L79.9 323.8L79 325.2L78.2 326.7L77.6 328.2L77.2 329.7L77 331.2L77 332.7L78.1 334.1L79.4 335.4L80.9 336.8L82.6 338L84.5 339.3L86.4 340.5L88.4 341.6L87.8 343.2L87.2 344.8L86.8 346.4L86.5 348.1L86.4 349.7L86.5 351.3L86.9 352.8L88.2 354.1L89.7 355.3L91.4 356.4L93.3 357.4L95.2 358.4L97.3 359.3L99.4 360.2L99.1 361.9L98.9 363.7L98.8 365.4L98.9 367.2L99.2 368.8L99.6 370.4L100.2 372L101.7 373.1L103.4 374.1L105.2 375L107.2 375.7L109.3 376.4L111.4 377L113.5 377.6L113.6 379.4L113.8 381.3L114.1 383.1L114.5 384.9L115.1 386.5L115.8 388.1L116.7 389.6L118.4 390.5L120.1 391.3L122 391.9L124 392.4L126.1 392.8L128.2 393.1L130.4 393.3L130.8 395.2L131.4 397.1L132 398.9L132.8 400.6L133.6 402.3L134.7 403.8L135.8 405.2L137.5 405.8L139.4 406.3L141.3 406.7L143.3 406.9L145.3 407L147.4 406.9L149.4 406.8L150.2 408.7L151.1 410.5L152.1 412.3L153.2 414L154.3 415.6L155.6 417L157 418.2L158.7 418.6L160.5 418.8L162.4 418.9L164.3 418.8L166.2 418.5L168.2 418.2L170.1 417.8L171.2 419.6L172.4 421.3L173.7 423L175.1 424.6L176.5 426L177.9 427.2L179.5 428.3L181.2 428.4L183 428.4L184.7 428.1L186.5 427.7L188.3 427.2L190 426.5L191.7 425.8L193.2 427.4L194.7 429.1L196.2 430.6L197.8 432L199.4 433.2L201 434.3L202.7 435.1L204.4 435L206 434.7L207.6 434.1L209.2 433.4L210.7 432.6L212.2 431.6L213.7 430.6L215.4 432.1L217.1 433.5L218.9 434.8L220.7 436L222.4 437.1L224.2 437.9L225.9 438.5L227.5 438.1L228.9 437.5L230.4 436.7L231.7 435.7L233 434.6L234.2 433.4L235.3 432.1L237.3 433.4L239.2 434.6L241.1 435.7L243 436.6L244.9 437.4L246.7 438L248.5 438.3L249.8 437.7L251.1 436.8L252.3 435.8L253.3 434.6L254.3 433.2L255.2 431.8L256 430.3L258.1 431.3L260.1 432.2L262.1 433L264.1 433.7L266 434.2L267.9 434.5L269.6 434.6L270.7 433.7L271.8 432.7L272.6 431.4L273.4 430L274 428.4L274.6 426.8L275 425.1L277.2 425.8L279.3 426.5L281.4 427L283.4 427.4L285.3 427.6L287.1 427.6L288.7 427.4L289.6 426.4L290.3 425.1L290.9 423.7L291.3 422.1L291.6 420.4L291.8 418.6L291.9 416.8L294 417.2L296.2 417.5L298.2 417.7L300.2 417.8L302 417.7L303.7 417.5L305.2 417L305.8 415.8L306.2 414.4L306.5 412.8L306.6 411.1L306.5 409.3L306.3 407.5L306 405.6L308.1 405.7L310.2 405.7L312.1 405.6L314 405.4L315.7 405L317.2 404.4L318.5 403.8L318.9 402.4L319 400.8L318.9 399.2L318.6 397.5L318.2 395.6L317.6 393.8L317 391.9L319 391.6L320.9 391.3L322.8 390.9L324.5 390.3L326 389.7L327.3 388.9L328.4 388L328.4 386.5L328.2 384.9L327.8 383.2L327.2 381.5L326.4 379.7L325.5 377.8L324.5 376L326.3 375.4L328.1 374.7L329.7 374L331.2 373.2L332.5 372.3L333.6 371.3L334.4 370.2L334.2 368.6L333.7 367L332.9 365.4L332 363.6L330.9 361.9L329.6 360.2L328.3 358.4L329.9 357.5L331.4 356.6L332.8 355.6L334.1 354.5L335.1 353.4L335.9 352.2Z" fill="none" stroke="#f00" stroke-width="3" stroke-linejoin="round" stroke-linecap="round"/>
<path d="M376.8 317.4L333.3 337.4M373 298.2L329.5 318.2M365.5 279L322 299M354.5 260.4L311 280.4M340.4 243L296.9 263M323.5 227.2L280 247.3M304.5 213.7L261 233.8M129.4 300L85.9 320.1M136.9 319.2L93.4 339.3M147.9 337.8L104.4 357.9M162 355.3L118.5 375.3M178.9 371L135.4 391M197.9 384.5L154.4 404.5" fill="none" stroke="#000" stroke-width="1" stroke-dasharray="26 2 40"/>
<path d="M283.8 202.8L240.3 222.8M125.6 262.1L82.1 282.2M125.6 280.8L82.1 300.9M218.6 395.4L175.1 415.5M376.8 336.1L333.3 356.1" fill="none" stroke="#000" stroke-width="1" stroke-dasharray="1.5 1.5"/>
<rect x="367.5" y="55.5" width="276" height="40" fill="none" stroke="#ff0"/><path d="M367 63.5H644M367 71.5H644M367 79.5H644M367 87.5H644M456.5 63V95M481.5 63V95M507.5 63V95M532.5 63V95M557.5 63V95M582.5 63V95M607.5 63V95M632.5 63V95" fill="none" stroke="#ff0" stroke-width="1"/>
<g fill="#0f0" stroke="#0f0" stroke-width="0.25" font-family="'Liberation Sans',sans-serif" font-size="4.95px" shape-rendering="auto"><text x="368.2" y="61.3">Filename</text><text x="457.7" y="61.3">Z0</text><text x="482.7" y="61.3">Z1</text><text x="508.2" y="61.3">DX</text><text x="533.2" y="61.3">DY</text><text x="558.2" y="61.3">phiXY</text><text x="583.2" y="61.3">ScaleX</text><text x="608.7" y="61.3">ScaleY</text><text x="633.2" y="61.3">Dir</text><text x="368.2" y="69.3">H:\APPS\TP\TRAIN\cyclo192.go1</text><text x="460.7" y="69.3">0,00</text><text x="485.7" y="69.3">6,00</text><text x="511.2" y="69.3">0,00</text><text x="536.2" y="69.3">0,00</text><text x="561.2" y="69.3">0</text><text x="586.2" y="69.3">1,00</text><text x="611.7" y="69.3">1,00</text><text x="633.5" y="69.3">+</text><text x="368.2" y="77.3">H:\APPS\TP\TRAIN\d1.go1</text><text x="460.7" y="77.3">0,00</text><text x="485.7" y="77.3">6,00</text><text x="511.2" y="77.3">0,00</text><text x="536.2" y="77.3">0,00</text><text x="561.2" y="77.3">0</text><text x="584.6" y="77.3">12,00</text><text x="610.1" y="77.3">12,00</text><text x="633.5" y="77.3">+</text><text x="368.2" y="85.3">H:\APPS\TP\TRAIN\hexagon.go1</text><text x="460.7" y="85.3">0,00</text><text x="485.7" y="85.3">4,00</text><text x="511.2" y="85.3">0,00</text><text x="536.2" y="85.3">0,00</text><text x="561.2" y="85.3">0</text><text x="586.2" y="85.3">9,00</text><text x="610.1" y="85.3">16,00</text><text x="633.5" y="85.3">+</text><text x="368.2" y="93.3">H:\APPS\TP\TRAIN\d1.go1</text><text x="460.7" y="93.3">0,00</text><text x="485.7" y="93.3">4,00</text><text x="511.2" y="93.3">0,00</text><text x="536.2" y="93.3">0,00</text><text x="561.2" y="93.3">0</text><text x="586.2" y="93.3">9,20</text><text x="611.7" y="93.3">9,20</text><text x="633.5" y="93.3">-</text></g>
</svg>
</body></html>
